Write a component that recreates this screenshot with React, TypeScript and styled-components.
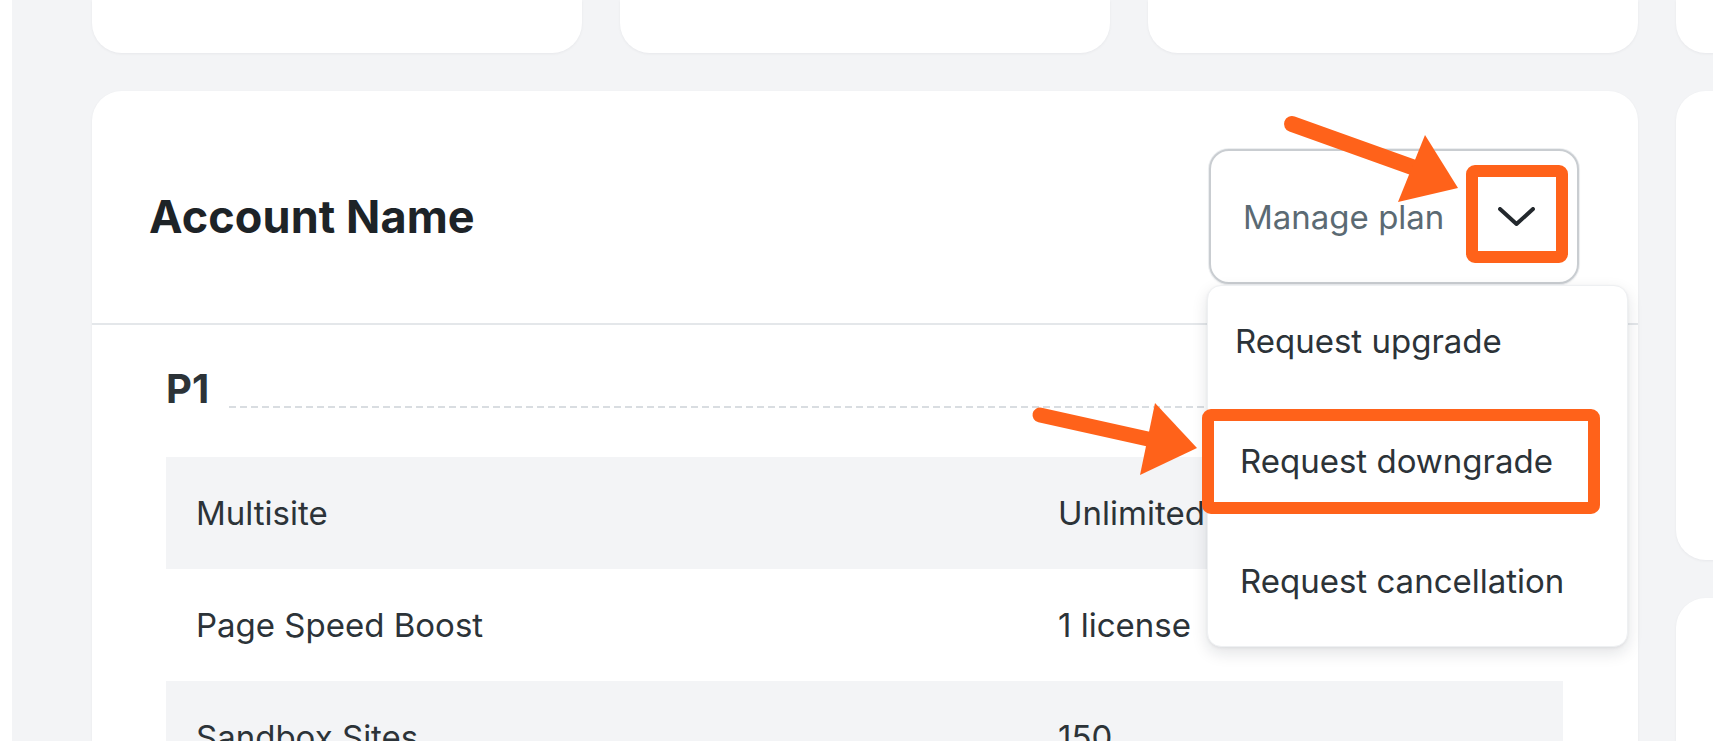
import React from 'react';
import styled, { createGlobalStyle } from 'styled-components';

const GlobalStyle = createGlobalStyle`
  html, body {
    margin: 0;
    padding: 0;
    background: #ffffff;
  }
  body {
    font-family: Inter, "Liberation Sans", Arial, sans-serif;
    color: #2c3338;
    -webkit-font-smoothing: antialiased;
  }
  * {
    box-sizing: border-box;
  }
`;

const ORANGE = '#ff621a';

const Page = styled.div`
  position: relative;
  display: flex;
  width: 1713px;
  height: 741px;
  overflow: hidden;
`;

const Workspace = styled.div`
  flex: 1;
  margin-left: 12px;
  padding-left: 80px;
  display: flex;
  gap: 38px;
  background: #f3f4f6;
  overflow: hidden;
`;

const MainColumn = styled.div`
  width: 1546px;
  flex-shrink: 0;
  display: flex;
  flex-direction: column;
  gap: 38px;
`;

const SideColumn = styled.div`
  width: 400px;
  flex-shrink: 0;
  display: flex;
  flex-direction: column;
  gap: 38px;
`;

const StatRow = styled.div`
  display: grid;
  grid-template-columns: repeat(3, 1fr);
  gap: 38px;
  flex-shrink: 0;
`;

const StubCard = styled.div`
  height: 53px;
  flex-shrink: 0;
  background: #ffffff;
  border-radius: 0 0 30px 30px;
  box-shadow: 0 1px 3px rgba(16, 24, 40, 0.05);
`;

const SidePanel = styled.div<{ $height: number }>`
  height: ${(p) => p.$height}px;
  flex-shrink: 0;
  background: #ffffff;
  border-radius: 30px;
  box-shadow: 0 1px 3px rgba(16, 24, 40, 0.05);
`;

const AccountCard = styled.section`
  background: #ffffff;
  border-radius: 30px 30px 0 0;
  box-shadow: 0 1px 3px rgba(16, 24, 40, 0.05);
  flex: 1;
`;

const CardHeader = styled.header`
  display: flex;
  align-items: center;
  justify-content: space-between;
  padding: 58px 59px 39px 57px;
  border-bottom: 2px solid #e4e7ea;
`;

const Title = styled.h2`
  margin: 0;
  font-size: 45px;
  font-weight: 700;
  line-height: 53px;
  color: #1d2327;
  letter-spacing: 0.1px;
`;

const MenuAnchor = styled.div`
  position: relative;
`;

const ManageButton = styled.button`
  width: 370px;
  height: 135px;
  display: flex;
  align-items: center;
  justify-content: space-between;
  padding: 0 42px 0 32px;
  background: #ffffff;
  border: 2px solid #c9cdd1;
  border-radius: 20px;
  box-shadow: 0 0 0 1px #eceef0, 0 1px 2px rgba(0, 0, 0, 0.08);
  font-family: inherit;
  font-size: 33px;
  color: #5b6a73;
  cursor: pointer;
`;

const Dropdown = styled.div`
  position: absolute;
  top: calc(100% + 1px);
  left: -2px;
  width: 421px;
  padding: 0;
  background: #ffffff;
  border: 1px solid #eef0f2;
  border-radius: 14px;
  box-shadow: 0 6px 16px rgba(16, 24, 40, 0.12), 0 1px 3px rgba(16, 24, 40, 0.06);
  z-index: 5;
`;

const MenuItem = styled.div<{ $inset: number }>`
  height: 120px;
  display: flex;
  align-items: center;
  padding: 0 0 11px ${(p) => p.$inset}px;
  font-size: 33px;
  color: #2c3338;
  cursor: pointer;
`;

const CardBody = styled.div`
  padding: 40px 75px 0 74px;
`;

const PlanHeading = styled.div`
  display: flex;
  align-items: flex-end;
  gap: 20px;
`;

const PlanName = styled.h3`
  margin: 0;
  font-size: 40px;
  font-weight: 700;
  line-height: 48px;
  color: #2c3338;
`;

const DashRule = styled.div`
  flex: 1;
  height: 2px;
  margin-bottom: 5px;
  background-image: linear-gradient(to right, #d9dde1 0 7px, transparent 7px);
  background-size: 11px 2px;
  background-repeat: repeat-x;
`;

const FeatureTable = styled.div`
  margin-top: 44px;
  display: flex;
  flex-direction: column;
`;

const FeatureRow = styled.div<{ $shaded: boolean }>`
  display: grid;
  grid-template-columns: 862px 1fr;
  align-items: center;
  height: 112px;
  padding-left: 30px;
  background: ${(p) => (p.$shaded ? '#f3f4f6' : '#ffffff')};
`;

const Cell = styled.span`
  font-size: 33px;
  color: #2c3338;
`;

const Annotations = styled.svg`
  position: absolute;
  inset: 0;
  pointer-events: none;
  z-index: 10;
`;

const features = [
  { label: 'Multisite', value: 'Unlimited' },
  { label: 'Page Speed Boost', value: '1 license' },
  { label: 'Sandbox Sites', value: '150' },
];

const menuItems = [
  { label: 'Request upgrade', inset: 27 },
  { label: 'Request downgrade', inset: 32 },
  { label: 'Request cancellation', inset: 32 },
];

const Chevron: React.FC = () => (
  <svg width="37" height="19" viewBox="0 0 37 19" fill="none">
    <path d="M2 2 L18.5 17 L35 2" stroke="#23282d" strokeWidth="4" strokeLinecap="round" strokeLinejoin="round" />
  </svg>
);

const App: React.FC = () => {
  return (
    <>
      <GlobalStyle />
      <Page>
        <Workspace>
          <MainColumn>
            <StatRow>
              <StubCard />
              <StubCard />
              <StubCard />
            </StatRow>
            <AccountCard>
              <CardHeader>
                <Title>Account Name</Title>
                <MenuAnchor>
                  <ManageButton type="button">
                    <span>Manage plan</span>
                    <Chevron />
                  </ManageButton>
                  <Dropdown role="menu">
                    {menuItems.map((item) => (
                      <MenuItem key={item.label} role="menuitem" $inset={item.inset}>
                        {item.label}
                      </MenuItem>
                    ))}
                  </Dropdown>
                </MenuAnchor>
              </CardHeader>
              <CardBody>
                <PlanHeading>
                  <PlanName>P1</PlanName>
                  <DashRule />
                </PlanHeading>
                <FeatureTable>
                  {features.map((f, i) => (
                    <FeatureRow key={f.label} $shaded={i % 2 === 0}>
                      <Cell>{f.label}</Cell>
                      <Cell>{f.value}</Cell>
                    </FeatureRow>
                  ))}
                </FeatureTable>
              </CardBody>
            </AccountCard>
          </MainColumn>
          <SideColumn>
            <StubCard />
            <SidePanel $height={469} />
            <SidePanel $height={400} />
          </SideColumn>
        </Workspace>

        <Annotations width="1713" height="741" viewBox="0 0 1713 741">
          {/* arrow to the chevron */}
          <line x1="1292" y1="124" x2="1412" y2="167" stroke={ORANGE} strokeWidth="16" strokeLinecap="round" />
          <polygon points="1425,135 1458,188 1398,202" fill={ORANGE} />
          <rect x="1472" y="171" width="90" height="86" rx="3" fill="none" stroke={ORANGE} strokeWidth="12" />

          {/* arrow to the downgrade item */}
          <line x1="1040" y1="415" x2="1148" y2="439" stroke={ORANGE} strokeWidth="15" strokeLinecap="round" />
          <polygon points="1155,403 1197,448 1140,475" fill={ORANGE} />
          <rect x="1208" y="415" width="386" height="93" rx="3" fill="none" stroke={ORANGE} strokeWidth="12" />
        </Annotations>
      </Page>
    </>
  );
};

export default App;
